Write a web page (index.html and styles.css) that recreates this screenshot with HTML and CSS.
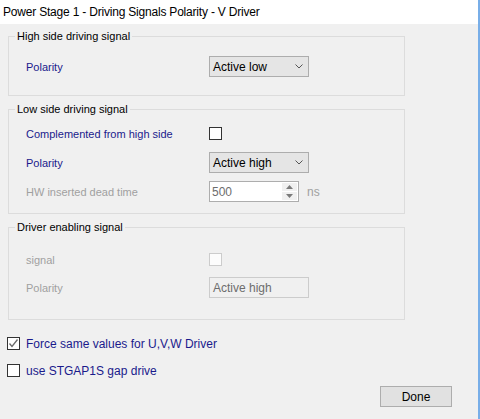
FILE: index.html
```html
<!DOCTYPE html>
<html lang="en">
<head>
  <meta charset="UTF-8" />
  <title>Power Stage 1 - Driving Signals Polarity - V Driver</title>
  <link rel="stylesheet" href="styles.css">
</head>
<body>

<div class="window">
  <div class="titlebar">Power Stage 1 - Driving Signals Polarity - V Driver</div>

  <div class="client">

    <fieldset class="group group-high">
      <legend>High side driving signal</legend>
      <div class="fields">
        <span class="label">Polarity</span>
        <div class="combo">
          <span>Active low</span>
          <svg class="chevron" width="8" height="5" viewBox="0 0 8 5"><path d="M0.5 0.5 L4 4 L7.5 0.5" fill="none" stroke="#555" stroke-width="1"/></svg>
        </div>
      </div>
    </fieldset>

    <fieldset class="group group-low">
      <legend>Low side driving signal</legend>
      <div class="fields">
        <span class="label">Complemented from high side</span>
        <div class="cell"><span class="check"></span></div>

        <span class="label">Polarity</span>
        <div class="combo">
          <span>Active high</span>
          <svg class="chevron" width="8" height="5" viewBox="0 0 8 5"><path d="M0.5 0.5 L4 4 L7.5 0.5" fill="none" stroke="#555" stroke-width="1"/></svg>
        </div>

        <span class="label disabled">HW inserted dead time</span>
        <div class="cell">
          <div class="spin">
            <span class="spin-value">500</span>
            <div class="spin-btns">
              <span class="spin-up"><svg width="7" height="4" viewBox="0 0 7 4"><path d="M0 4 L3.5 0 L7 4 Z" fill="#7a7a7a"/></svg></span>
              <span class="spin-down"><svg width="7" height="4" viewBox="0 0 7 4"><path d="M0 0 L3.5 4 L7 0 Z" fill="#7a7a7a"/></svg></span>
            </div>
          </div>
          <span class="unit">ns</span>
        </div>
      </div>
    </fieldset>

    <fieldset class="group group-enable">
      <legend>Driver enabling signal</legend>
      <div class="fields">
        <span class="label disabled">signal</span>
        <div class="cell"><span class="check check-disabled"></span></div>

        <span class="label disabled">Polarity</span>
        <div class="combo combo-disabled"><span>Active high</span></div>
      </div>
    </fieldset>

    <div class="options">
      <div class="option">
        <span class="check">
          <svg width="11" height="11" viewBox="0 0 11 11"><path d="M1.5 5.5 L4 8.5 L9.5 1.5" fill="none" stroke="#6a6a6a" stroke-width="1.3"/></svg>
        </span>
        <span class="option-text">Force same values for U,V,W Driver</span>
      </div>
      <div class="option">
        <span class="check"></span>
        <span class="option-text">use STGAP1S gap drive</span>
      </div>
    </div>

    <div class="actions">
      <button class="btn">Done</button>
    </div>

  </div>
</div>

</body>
</html>
```

FILE: styles.css
```css
body {
  margin: 0;
  padding: 0;
  font-family: 'Liberation Sans', Arial, sans-serif;
  font-size: 11px;
  color: #000;
  background: #f0f0f0;
}

.window {
  width: 478px;
  height: 419px;
  border-right: 2px solid #78aee8;
  background: #f0f0f0;
  overflow: hidden;
}

.titlebar {
  height: 24px;
  line-height: 24px;
  padding-left: 3px;
  background: #fff;
  font-size: 12px;
  letter-spacing: -0.2px;
  color: #000;
  white-space: nowrap;
}

.client {
  padding: 5px 0 0 8px;
}

.group {
  box-sizing: border-box;
  width: 397px;
  margin: 0 0 6px 0;
  padding: 0;
  border: 1px solid #dcdcdc;
  min-width: 0;
}

.group legend {
  margin-left: 6px;
  padding: 0 2px;
  line-height: 14px;
  font-size: 11px;
  color: #000;
}

.fields {
  display: grid;
  grid-template-columns: 183px auto;
  grid-auto-rows: 21px;
  align-items: center;
  padding-left: 17px;
}

.group-high .fields {
  padding-top: 13px;
  padding-bottom: 18px;
}

.group-low .fields {
  padding-top: 7px;
  padding-bottom: 11px;
  row-gap: 8px;
}

.group-enable .fields {
  padding-top: 15px;
  padding-bottom: 21px;
  row-gap: 7px;
}

.label {
  color: #1a1a8c;
  white-space: nowrap;
}

.label.disabled {
  color: #a0a0a0;
}

.cell {
  display: flex;
  align-items: center;
}

.combo {
  box-sizing: border-box;
  width: 100px;
  height: 21px;
  display: flex;
  align-items: center;
  justify-content: space-between;
  padding: 0 5px 0 3px;
  background: #e5e5e5;
  border: 1px solid #adadad;
  font-size: 12px;
}

.combo-disabled {
  background: #f0f0f0;
  border-color: #cccccc;
  color: #6d6d6d;
}

.check {
  box-sizing: border-box;
  width: 13px;
  height: 13px;
  border: 1px solid #333;
  background: #fff;
  display: inline-flex;
  align-items: center;
  justify-content: center;
}

.check-disabled {
  border-color: #cccccc;
  background: #fcfcfc;
}

.spin {
  box-sizing: border-box;
  width: 90px;
  height: 21px;
  display: flex;
  align-items: center;
  background: #fff;
  border: 1px solid #adadad;
}

.spin-value {
  flex: 1;
  padding-left: 2px;
  font-size: 12px;
  color: #6d6d6d;
}

.spin-btns {
  width: 15px;
  height: 17px;
  margin-right: 1px;
  display: flex;
  flex-direction: column;
  background: #f0f0f0;
}

.spin-btns span {
  flex: 1;
  display: flex;
  align-items: center;
  justify-content: center;
}

.spin-up {
  border-bottom: 1px solid #fff;
}

.unit {
  margin-left: 8px;
  color: #a0a0a0;
  font-size: 12px;
}

.options {
  margin-top: 17px;
  margin-left: -1px;
  display: flex;
  flex-direction: column;
  gap: 14px;
}

.option {
  display: flex;
  align-items: center;
  height: 13px;
  gap: 6px;
  color: #1a1a8c;
  font-size: 12px;
}

.actions {
  display: flex;
  justify-content: flex-end;
  padding-right: 26px;
  margin-top: 9px;
}

.btn {
  box-sizing: border-box;
  width: 72px;
  height: 21px;
  background: #e1e1e1;
  border: 1px solid #adadad;
  font-family: 'Liberation Sans', Arial, sans-serif;
  font-size: 12px;
  color: #000;
  padding: 0;
}
```
